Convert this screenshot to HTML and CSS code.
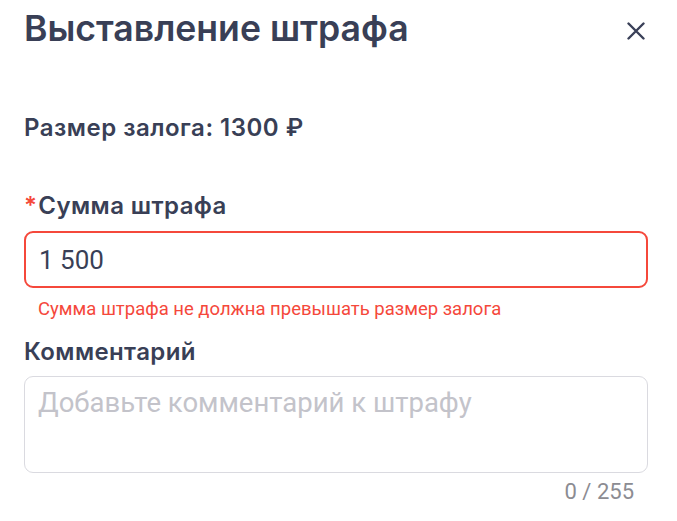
FILE: index.html
```html
<!DOCTYPE html>
<html lang="ru">
<head>
<meta charset="utf-8">
<link rel="stylesheet" href="styles.css">
</head>
<body>
<div class="modal">
  <div class="header">
    <h1 class="title">Выставление штрафа</h1>
    <button class="close" aria-label="Закрыть">
      <svg width="18" height="18" viewBox="0 0 18 18"><path d="M1.5 1.5L16.5 16.5M16.5 1.5L1.5 16.5" stroke="#3a4058" stroke-width="2.4" stroke-linecap="round"/></svg>
    </button>
  </div>
  <div class="deposit">Размер залога: 1300 ₽</div>
  <div class="field">
    <label class="label"><span class="req">*</span>Сумма штрафа</label>
    <div class="input error">1 500</div>
    <div class="error-text">Сумма штрафа не должна превышать размер залога</div>
  </div>
  <div class="field comment">
    <label class="label">Комментарий</label>
    <div class="textarea"><span class="placeholder">Добавьте комментарий к штрафу</span></div>
    <div class="counter">0 / 255</div>
  </div>
</div>
</body>
</html>
```
FILE: styles.css
```css
* { box-sizing: border-box; }
html, body { margin: 0; padding: 0; background: #fff; }
body { font-family: Inter, "Noto Sans", sans-serif; color: #393f56; }
.modal { padding: 8px 29px 0 24px; }
.header { display: flex; align-items: flex-start; justify-content: space-between; height: 42px; }
.title { margin: 0; font-size: 35.6px; font-weight: 600; line-height: 42px; letter-spacing: 0; }
.close { border: 0; background: none; padding: 0; width: 24px; height: 24px; margin-top: 11px; display: flex; align-items: center; justify-content: center; }
.deposit { margin-top: 65px; font-size: 24px; font-weight: 600; line-height: 26px; letter-spacing: 0.5px; }
.field { display: flex; flex-direction: column; }
.label { font-size: 24px; font-weight: 600; line-height: 26px; letter-spacing: 0.4px; margin-top: 52px; }
.req { color: #f5483b; margin-right: 1px; }
.input { margin-top: 12px; height: 57px; border: 2px solid #f5483b; border-radius: 9px; padding: 0 13px; display: flex; align-items: center; font-family: Roboto, sans-serif; font-size: 26px; color: #393f56; }
.error-text { font-family: Roboto, sans-serif; color: #f5483b; font-size: 18.5px; line-height: 22px; margin-top: 10px; padding-left: 14px; }
.comment .label { margin-top: 19px; }
.textarea { margin-top: 11px; height: 97px; border: 1.5px solid #dadae0; border-radius: 9px; padding: 11px 13px; font-family: Roboto, sans-serif; font-size: 27.5px; line-height: 30px; }
.placeholder { color: #c3c3ca; }
.counter { text-align: right; font-family: Roboto, sans-serif; font-size: 22px; line-height: 26px; color: #8c8c92; margin-top: 6px; padding-right: 14px; }
```
